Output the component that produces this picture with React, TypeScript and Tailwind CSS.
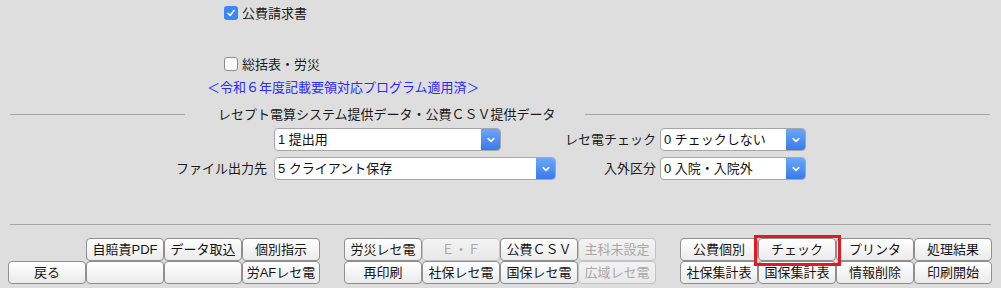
import React from "react";

const FONT = "font-['Liberation_Sans','Noto_Sans_CJK_JP',sans-serif]";

function Btn({ label, disabled }: { label?: string; disabled?: boolean }) {
  return (
    <div
      className={`w-[78px] h-[23px] flex items-center justify-center rounded-[4px] border text-[13px] leading-none whitespace-nowrap ${
        disabled
          ? "border-[#c2c2c2] text-[#a9a9a9] bg-linear-to-b from-[#f3f3f3] to-[#e9e9e9]"
          : "border-[#8f8f8f] text-[#151515] bg-linear-to-b from-[#ffffff] to-[#ebebeb]"
      }`}
    >
      {label}
    </div>
  );
}

function Gap() {
  return <div className="w-[78px] h-[23px]" />;
}

function Select({ value, width }: { value: string; width: string }) {
  return (
    <div className={`${width} h-[23px] flex rounded-[4px] border border-[#a6a6a6] bg-white overflow-hidden`}>
      <div className="flex-1 flex items-center pl-[3px] text-[13px] text-[#111] leading-none whitespace-nowrap">
        {value}
      </div>
      <div className="w-[19px] h-full flex items-center justify-center bg-linear-to-b from-[#6aa7fb] to-[#3a79ea]">
        <svg width="8" height="6" viewBox="0 0 8 6">
          <path d="M1.2 1.6 L4 4.3 L6.8 1.6" fill="none" stroke="white" strokeWidth="1.6" strokeLinecap="round" strokeLinejoin="round" />
        </svg>
      </div>
    </div>
  );
}

export default function App() {
  return (
    <div className={`relative w-[1001px] h-[288px] bg-[#dedede] overflow-hidden ${FONT} text-[#1a1a1a]`}>
      {/* checkbox 1 */}
      <div className="flex items-center pl-[224px] pt-[6px] h-[20px]">
        <div className="w-[14px] h-[14px] rounded-[3px] bg-[#3b86f7] flex items-center justify-center">
          <svg width="10" height="10" viewBox="0 0 10 10">
            <path d="M2 5.3 L4.1 7.5 L8 2.4" fill="none" stroke="white" strokeWidth="1.6" strokeLinecap="round" strokeLinejoin="round" />
          </svg>
        </div>
        <span className="ml-[4px] text-[13px] leading-none">公費請求書</span>
      </div>

      {/* checkbox 2 */}
      <div className="flex items-center pl-[224px] mt-[37px] h-[14px]">
        <div className="w-[14px] h-[14px] rounded-[3px] bg-white border border-[#8a8a8a]" />
        <span className="ml-[4px] text-[13px] leading-none">総括表・労災</span>
      </div>

      {/* notice */}
      <div className="pl-[207px] mt-[10px] h-[14px] text-[13px] leading-[14px] text-[#2a2aff] whitespace-nowrap">
        ＜令和６年度記載要領対応プログラム適用済＞
      </div>

      {/* legend separator */}
      <div className="flex items-center pl-[10px] pr-[11px] mt-[12px] h-[14px]">
        <div className="w-[175px] h-px bg-[#a5a5a5]" />
        <span className="ml-[33px] text-[13px] leading-none whitespace-nowrap">
          レセプト電算システム提供データ・公費ＣＳＶ提供データ
        </span>
        <div className="ml-[29px] flex-1 h-px bg-[#a5a5a5]" />
      </div>

      {/* select row 1 */}
      <div className="flex items-center mt-[7px]">
        <div className="w-[274px]" />
        <Select value="1 提出用" width="w-[227px]" />
        <div className="w-[155px] text-right text-[13px] leading-none whitespace-nowrap">レセ電チェック</div>
        <div className="ml-[4px]">
          <Select value="0 チェックしない" width="w-[146px]" />
        </div>
      </div>

      {/* select row 2 */}
      <div className="flex items-center mt-[6px]">
        <div className="w-[267px] text-right text-[13px] leading-none whitespace-nowrap">ファイル出力先</div>
        <div className="ml-[7px]">
          <Select value="5 クライアント保存" width="w-[282px]" />
        </div>
        <div className="w-[100px] text-right text-[13px] leading-none whitespace-nowrap">入外区分</div>
        <div className="ml-[4px]">
          <Select value="0 入院・入院外" width="w-[146px]" />
        </div>
      </div>

      {/* bottom separator */}
      <div className="mx-[10px] mt-[44px] h-px bg-[#a5a5a5]" />

      {/* buttons */}
      <div className="flex pl-[8px] mt-[13px] gap-[24px]">
        <div className="flex flex-col">
          <div className="flex">
            <Gap />
            <Btn label="自賠責PDF" />
            <Btn label="データ取込" />
            <Btn label="個別指示" />
          </div>
          <div className="flex">
            <Btn label="戻る" />
            <Btn />
            <Btn />
            <Btn label="労AFレセ電" />
          </div>
        </div>
        <div className="flex flex-col">
          <div className="flex">
            <Btn label="労災レセ電" />
            <Btn label="Ｅ・Ｆ" disabled />
            <Btn label="公費ＣＳＶ" />
            <Btn label="主科未設定" disabled />
          </div>
          <div className="flex">
            <Btn label="再印刷" />
            <Btn label="社保レセ電" />
            <Btn label="国保レセ電" />
            <Btn label="広域レセ電" disabled />
          </div>
        </div>
        <div className="flex flex-col">
          <div className="flex">
            <Btn label="公費個別" />
            <Btn label="チェック" />
            <Btn label="プリンタ" />
            <Btn label="処理結果" />
          </div>
          <div className="flex">
            <Btn label="社保集計表" />
            <Btn label="国保集計表" />
            <Btn label="情報削除" />
            <Btn label="印刷開始" />
          </div>
        </div>
      </div>

      {/* red highlight */}
      <div className="absolute left-[754px] top-[235px] w-[87px] h-[31px] border-[3px] border-[#e01b24]" />
    </div>
  );
}
